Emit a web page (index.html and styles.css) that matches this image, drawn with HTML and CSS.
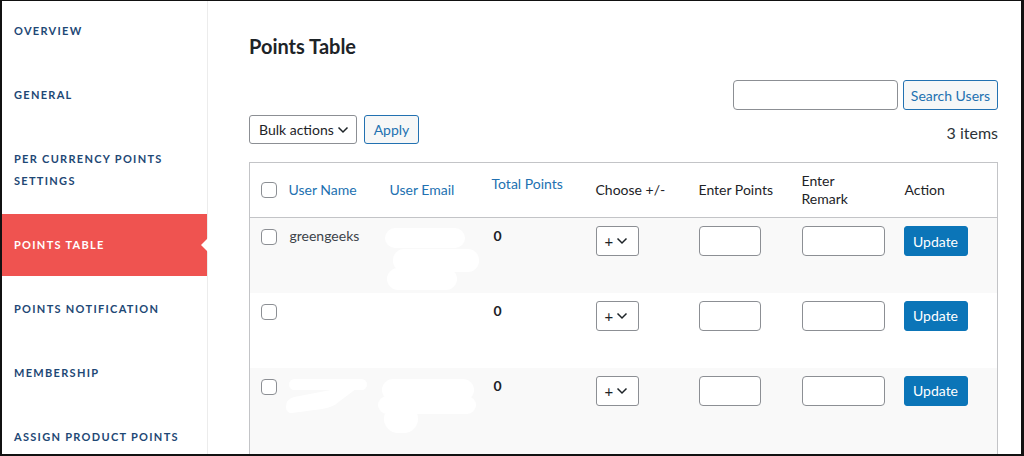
FILE: index.html
```html
<!DOCTYPE html>
<html>
<head>
<meta charset="utf-8">
<link rel="stylesheet" href="styles.css">
</head>
<body>
<div class="frame">
  <nav class="sidebar">
    <a class="nav-item">Overview</a>
    <a class="nav-item">General</a>
    <a class="nav-item">Per Currency Points<br>Settings</a>
    <a class="nav-item active">Points Table</a>
    <a class="nav-item">Points Notification</a>
    <a class="nav-item">Membership</a>
    <a class="nav-item">Assign Product Points</a>
  </nav>
  <main class="main">
    <h1 class="title">Points Table</h1>
    <div class="search-row">
      <div class="search-input"></div>
      <button class="btn-secondary search-btn">Search Users</button>
    </div>
    <div class="tablenav">
      <div class="bulk">
        <div class="select bulk-select"><span>Bulk actions</span><svg class="chev" width="12" height="8" viewBox="0 0 12 8"><path d="M1.5 1.5 L6 6 L10.5 1.5" fill="none" stroke="#1d2327" stroke-width="1.5"/></svg></div>
        <button class="btn-secondary apply-btn">Apply</button>
      </div>
      <div class="count">3 items</div>
    </div>
    <table class="points">
      <colgroup>
        <col class="c-cb"><col class="c-name"><col class="c-email"><col class="c-total"><col class="c-choose"><col class="c-pts"><col class="c-remark"><col class="c-action">
      </colgroup>
      <thead>
        <tr>
          <th class="cb"><span class="checkbox"></span></th>
          <th class="link">User Name</th>
          <th class="link">User Email</th>
          <th class="link total">Total Points</th>
          <th>Choose +/-</th>
          <th>Enter Points</th>
          <th class="remark">Enter<br>Remark</th>
          <th>Action</th>
        </tr>
      </thead>
      <tbody>
        <tr class="alt">
          <td class="cb"><span class="checkbox"></span></td>
          <td class="name">greengeeks</td>
          <td class="email"><svg class="redact r1" width="100" height="66" viewBox="0 0 100 66"><rect x="2" y="0" width="80" height="20" rx="10" fill="#fff"/><rect x="10" y="21" width="86" height="23" rx="11" fill="#fff"/><rect x="4" y="40" width="70" height="22" rx="11" fill="#fff"/></svg></td>
          <td class="num">0</td>
          <td><div class="select pm"><span>+</span><svg class="chev" width="12" height="8" viewBox="0 0 12 8"><path d="M1.5 1.5 L6 6 L10.5 1.5" fill="none" stroke="#1d2327" stroke-width="1.5"/></svg></div></td>
          <td><div class="input pts"></div></td>
          <td><div class="input rem"></div></td>
          <td class="act"><button class="btn-primary">Update</button></td>
        </tr>
        <tr>
          <td class="cb"><span class="checkbox"></span></td>
          <td class="name"></td>
          <td class="email"></td>
          <td class="num">0</td>
          <td><div class="select pm"><span>+</span><svg class="chev" width="12" height="8" viewBox="0 0 12 8"><path d="M1.5 1.5 L6 6 L10.5 1.5" fill="none" stroke="#1d2327" stroke-width="1.5"/></svg></div></td>
          <td><div class="input pts"></div></td>
          <td><div class="input rem"></div></td>
          <td class="act"><button class="btn-primary">Update</button></td>
        </tr>
        <tr class="alt last">
          <td class="cb"><span class="checkbox"></span></td>
          <td class="name"><svg class="redact r3n" width="84" height="38" viewBox="0 0 84 38"><rect x="3" y="0" width="78" height="11" rx="5.5" fill="#fff"/><path d="M78 4 L54 22 Q48 28 36 30 L6 34 Q0 34 0 28 Q0 20 8 18 L50 10 Z" fill="#fff"/></svg></td>
          <td class="email"><svg class="redact r3e" width="104" height="56" viewBox="0 0 104 56"><rect x="6" y="0" width="92" height="22" rx="11" fill="#fff"/><rect x="2" y="17" width="98" height="18" rx="9" fill="#fff"/><rect x="8" y="26" width="34" height="28" rx="14" fill="#fff"/></svg></td>
          <td class="num">0</td>
          <td><div class="select pm"><span>+</span><svg class="chev" width="12" height="8" viewBox="0 0 12 8"><path d="M1.5 1.5 L6 6 L10.5 1.5" fill="none" stroke="#1d2327" stroke-width="1.5"/></svg></div></td>
          <td><div class="input pts"></div></td>
          <td><div class="input rem"></div></td>
          <td class="act"><button class="btn-primary">Update</button></td>
        </tr>
      </tbody>
    </table>
  </main>
</div>
</body>
</html>
```
FILE: styles.css
```css
* { box-sizing: border-box; }
html, body { margin: 0; padding: 0; }
body {
  font-family: Lato, "Open Sans", "Liberation Sans", sans-serif;
  color: #1d2327;
  background: #fff;
}
.frame {
  width: 1024px;
  height: 456px;
  border-style: solid;
  border-color: #111;
  border-width: 1px 3px 2px 2px;
  display: flex;
  overflow: hidden;
  background: #fff;
}
.sidebar {
  width: 206px;
  flex: none;
  border-right: 1px solid #ececec;
  display: flex;
  flex-direction: column;
  gap: 2px;
}
.nav-item {
  position: relative;
  display: block;
  padding: 20px 12px 20px 12px;
  line-height: 22px;
  font-size: 11px;
  font-weight: 700;
  letter-spacing: 1.3px;
  text-transform: uppercase;
  color: #1e4875;
}
.nav-item:first-child { margin-top: -1px; }
.nav-item.active {
  background: #ef5350;
  color: #fff;
}
.nav-item.active::after {
  content: "";
  position: absolute;
  right: -1px;
  top: 50%;
  margin-top: -7px;
  border-style: solid;
  border-width: 7px 7px 7px 0;
  border-color: transparent #fff transparent transparent;
}
.main {
  flex: 1;
  padding: 31px 23px 0 41px;
  min-width: 0;
}
.title {
  margin: 0;
  font-size: 20px;
  line-height: 28px;
  font-weight: 700;
  color: #1d2327;
}
.search-row {
  display: flex;
  justify-content: flex-end;
  gap: 5px;
  margin-top: 20px;
}
.search-input {
  width: 165px;
  height: 30px;
  border: 1px solid #8c8f94;
  border-radius: 4px;
  background: #fff;
}
.btn-secondary {
  font-family: inherit;
  font-size: 14px;
  color: #2271b1;
  border: 1px solid #2271b1;
  background: #f6f7f7;
  border-radius: 3px;
  padding: 0 9px;
  height: 30px;
  cursor: pointer;
}
.search-btn { width: 95px; padding: 0; }
.tablenav {
  display: flex;
  justify-content: space-between;
  align-items: flex-start;
  margin-top: 5px;
}
.bulk { display: flex; gap: 7px; }
.select {
  display: flex;
  align-items: center;
  justify-content: space-between;
  height: 29px;
  border: 1px solid #8c8f94;
  border-radius: 3px;
  background: #fff;
  font-size: 14px;
  color: #1d2327;
}
.bulk-select { width: 108px; padding: 0 7px 0 9px; }
.apply-btn { height: 29px; width: 55px; padding: 0; }
.count {
  font-size: 16px;
  color: #2c3338;
  padding-top: 8px;
  line-height: 20px;
}
.points {
  margin-top: 18px;
  width: 748px;
  table-layout: fixed;
  border-collapse: collapse;
  border: 1px solid #c3c4c7;
}
.c-cb { width: 31px; }
.c-name { width: 101px; }
.c-email { width: 102px; }
.c-total { width: 104px; }
.c-choose { width: 103px; }
.c-pts { width: 103px; }
.c-remark { width: 103px; }
.c-action { width: 101px; }
.points thead tr { height: 55px; }
.points th {
  text-align: left;
  font-weight: 400;
  font-size: 14px;
  line-height: 18px;
  padding: 0 8px;
  vertical-align: middle;
  border-bottom: 1px solid #c3c4c7;
  color: #1d2327;
  background: #fff;
}
.points th.link { color: #2271b1; }
.points th.total { padding-bottom: 12px; }
.points th.cb, .points td.cb { padding: 0 0 0 11px; }
.points tbody tr { height: 75px; }
.points tbody tr.last { height: 110px; }
.points tbody tr.alt td { background: #f9f9f9; }
.points td {
  vertical-align: top;
  padding: 8px 8px 0 8px;
  font-size: 14px;
  line-height: 20px;
  color: #3c434a;
  background: #fff;
  position: relative;
}
.points td.cb { padding-top: 11px; }
.points td.name { padding-left: 9px; }
.points td.num { font-weight: 700; color: #1d2327; padding-left: 10px; }
.points td.act { padding-left: 7px; }
.checkbox {
  display: block;
  width: 16px;
  height: 16px;
  border: 1px solid #8c8f94;
  border-radius: 4px;
  background: #fff;
}
.pm { width: 43px; height: 30px; padding: 0 10px 0 8px; }
.pm span { font-size: 15px; }
.input {
  height: 30px;
  border: 1px solid #8c8f94;
  border-radius: 4px;
  background: #fff;
}
.pts { width: 62px; }
.rem { width: 83px; }
.btn-primary {
  font-family: inherit;
  font-size: 14px;
  color: #fff;
  background: #0b75b8;
  border: 1px solid #0b75b8;
  border-radius: 3px;
  width: 64px;
  height: 30px;
  padding: 0;
}
.redact { position: absolute; }
.r1 { left: 1px; top: 10px; }
.r3n { left: 5px; top: 11px; }
.r3e { left: -6px; top: 11px; }
```
